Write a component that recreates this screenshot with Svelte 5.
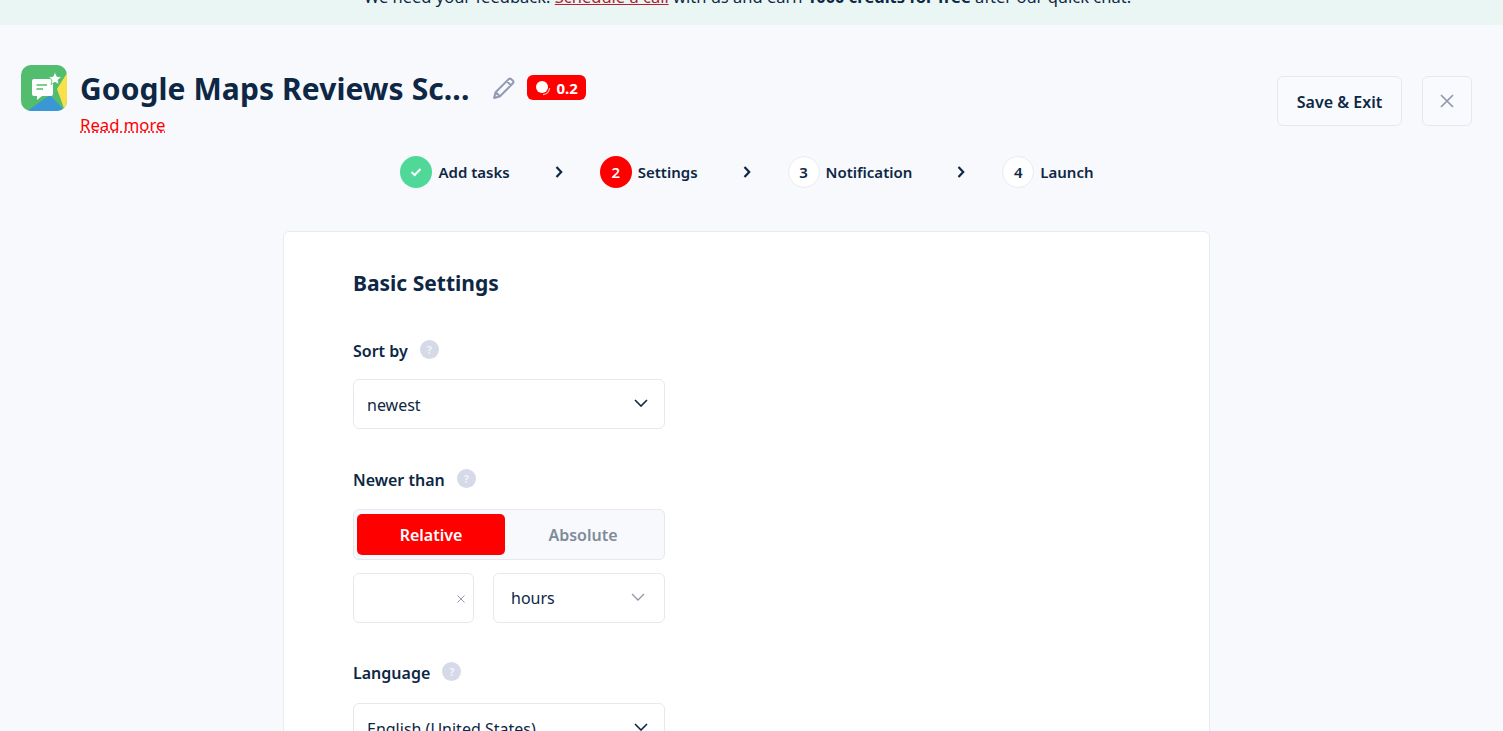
<script>
  const steps = [
    { label: 'Add tasks', state: 'done' },
    { label: 'Settings', state: 'active', num: 2 },
    { label: 'Notification', state: 'todo', num: 3 },
    { label: 'Launch', state: 'todo', num: 4 }
  ];
</script>

<div class="banner">
  <p>We need your feedback! <a href="#top">Schedule a call</a> with us and earn <b>1000 credits for free</b> after our quick chat!</p>
</div>

<header class="head">
  <svg class="logo" viewBox="0 0 46 46" aria-hidden="true">
    <defs><clipPath id="lg"><rect width="46" height="46" rx="10" /></clipPath></defs>
    <g clip-path="url(#lg)">
      <rect width="46" height="46" fill="#53bd6f" />
      <path d="M46 8 L36 24 L44 46 L46 46Z" fill="#f9e04b" />
      <path d="M6 46 L29 30 L44 46Z" fill="#3b96d6" />
    </g>
    <path d="M13 14 H30 Q32 14 32 16 V29 Q32 31 30 31 H21 L16 35 V31 H13 Q11 31 11 29 V16 Q11 14 13 14Z" fill="#fff" />
    <path d="M15.5 20 H26 M15.5 24 H22" stroke="#53bd6f" stroke-width="1.6" />
    <path d="M34 7 L36 11.5 L40.5 12 L37 15 L38 19.5 L34 17.2 L30 19.5 L31 15 L27.5 12 L32 11.5Z" fill="#fff" stroke="#53bd6f" stroke-width=".8" />
  </svg>
  <div class="title-col">
    <div class="title-row">
      <h1>Google Maps Reviews Sc...</h1>
      <svg class="pencil" viewBox="0 0 24 24" aria-hidden="true">
        <path d="M3 21 L4.4 15.6 L17 3 Q18.2 1.9 19.4 3 L21 4.6 Q22.1 5.8 21 7 L8.4 19.6Z M15.2 5 L19 8.8 M4.6 15.6 L8.4 19.4" fill="none" stroke="#939cb3" stroke-width="2" stroke-linejoin="round" />
      </svg>
      <span class="badge">
        <svg viewBox="0 0 16 16" aria-hidden="true">
          <circle cx="7" cy="7" r="6" fill="#fff" />
          <path d="M14.6 8 A7.5 7.5 0 0 1 8 14.6" fill="none" stroke="#ffb3b3" stroke-width="1.2" />
        </svg>
        0.2
      </span>
    </div>
    <a class="more" href="#top">Read more</a>
  </div>
  <div class="actions">
    <button class="save">Save &amp; Exit</button>
    <button class="close" aria-label="Close">
      <svg viewBox="0 0 14 14"><path d="M1 1 L13 13 M13 1 L1 13" stroke="#9297ad" stroke-width="1.7" fill="none" /></svg>
    </button>
  </div>
</header>

<nav class="steps">
  {#each steps as step, i}
    {#if i > 0}
      <svg class="arrow" viewBox="0 0 8 12" aria-hidden="true"><path d="M1.5 1 L6.2 6 L1.5 11" fill="none" stroke="#0d2744" stroke-width="2.2" /></svg>
    {/if}
    <div class="step">
      <span class="dot {step.state}">
        {#if step.state === 'done'}
          <svg viewBox="0 0 12 10" aria-hidden="true"><path d="M1.5 5 L4.6 8 L10.5 2" fill="none" stroke="#fff" stroke-width="2" /></svg>
        {:else}
          {step.num}
        {/if}
      </span>
      <span>{step.label}</span>
    </div>
  {/each}
</nav>

<main class="card">
  <h2>Basic Settings</h2>

  <div class="label first">Sort by <span class="help">?</span></div>
  <div class="select">
    <span>newest</span>
    <svg viewBox="0 0 14 8" aria-hidden="true"><path d="M1 1 L7 7 L13 1" fill="none" stroke="#0d2744" stroke-width="1.6" /></svg>
  </div>

  <div class="label newer">Newer than <span class="help">?</span></div>
  <div class="toggle">
    <span class="opt on">Relative</span>
    <span class="opt">Absolute</span>
  </div>
  <div class="pair">
    <div class="select num">
      <svg viewBox="0 0 8 8" aria-label="Clear"><path d="M.5 .5 L7.5 7.5 M7.5 .5 L.5 7.5" fill="none" stroke="#8f99a8" stroke-width="1" /></svg>
    </div>
    <div class="select unit">
      <span>hours</span>
      <svg viewBox="0 0 14 8" aria-hidden="true"><path d="M1 1 L7 7 L13 1" fill="none" stroke="#8f99a8" stroke-width="1.3" /></svg>
    </div>
  </div>

  <div class="label lang">Language <span class="help">?</span></div>
  <div class="select">
    <span>English (United States)</span>
    <svg viewBox="0 0 14 8" aria-hidden="true"><path d="M1 1 L7 7 L13 1" fill="none" stroke="#0d2744" stroke-width="1.6" /></svg>
  </div>
</main>

<style>
:global(html), :global(body) {
  height: 100%;
  overflow: hidden;
}
:global(body) {
  background: #f8f9fd;
  color: #0d2744;
  font-family: "Noto Sans", "Open Sans", sans-serif;
}
.banner {
  height: 25px;
  background: #e9f6f4;
  display: flex;
  justify-content: center;
  align-items: flex-end;
  overflow: hidden;
  font-size: 16.5px;
}
.banner p {
  margin: 0 8px 16px 0;
  line-height: 24px;
  white-space: nowrap;
}
.banner a {
  color: #b5202f;
}
.head {
  display: flex;
  align-items: flex-start;
  padding: 40px 31px 0 21px;
  height: 116px;
  box-sizing: border-box;
}
.logo {
  width: 46px;
  height: 46px;
  flex: none;
}
.title-col {
  margin-left: 13px;
}
.title-row {
  display: flex;
  align-items: flex-start;
  height: 48px;
}
h1 {
  margin: 0;
  font-size: 30px;
  line-height: 48px;
  font-weight: 700;
  letter-spacing: .09px;
  white-space: nowrap;
}
.pencil {
  width: 25px;
  height: 25px;
  margin: 11px 0 0 22px;
}
.badge {
  display: flex;
  align-items: center;
  gap: 5px;
  height: 25px;
  margin: 10px 0 0 11px;
  padding: 0 8px;
  border-radius: 6px;
  background: #ff0000;
  color: #fff;
  font-size: 15px;
  font-weight: 700;
}
.badge svg {
  width: 16px;
  height: 16px;
}
.more {
  display: block;
  color: #ff0000;
  font-size: 16.7px;
  line-height: 24px;
  text-decoration: underline dotted;
}
.actions {
  margin-left: auto;
  margin-top: 11px;
  display: flex;
  gap: 20px;
}
button {
  height: 50px;
  box-sizing: border-box;
  background: #f9fafd;
  border: 1px solid #e6e8f0;
  border-radius: 6px;
  color: inherit;
  font: 600 16px "Noto Sans", sans-serif;
}
.save {
  width: 125px;
  padding: 1px 0 0;
}
.close {
  width: 50px;
  padding: 0;
  display: flex;
  align-items: center;
  justify-content: center;
}
.close svg {
  width: 14px;
  height: 14px;
}
.steps {
  display: flex;
  justify-content: center;
  align-items: center;
  gap: 41px;
  height: 32px;
  margin-top: 15px;
  padding-right: 9px;
  font-size: 15px;
  font-weight: 600;
}
.step {
  display: flex;
  align-items: center;
  gap: 6px;
}
.arrow {
  width: 8px;
  height: 12px;
  margin: 0 -4px 0 4px;
}
.dot {
  width: 32px;
  height: 32px;
  box-sizing: border-box;
  border-radius: 50%;
  display: flex;
  align-items: center;
  justify-content: center;
  font-size: 15px;
}
.dot svg {
  width: 12px;
  height: 10px;
}
.done {
  background: #4fd898;
}
.active {
  background: #ff0000;
  color: #fff;
}
.todo {
  background: #fff;
  border: 1px solid #e9ebf1;
}
.card {
  margin: 43px 0 0 283px;
  width: 927px;
  box-sizing: border-box;
  padding: 35px 69px 40px;
  background: #fff;
  border: 1px solid #e9ebf0;
  border-radius: 6px;
}
h2 {
  margin: 0;
  font-size: 21px;
  line-height: 32px;
  font-weight: 700;
}
.label {
  display: flex;
  align-items: center;
  gap: 12px;
  height: 24px;
  margin: 39px 0 16px;
  font-size: 16px;
  font-weight: 600;
}
.first {
  margin-top: 40px;
}
.newer {
  margin-bottom: 17px;
}
.lang {
  margin-bottom: 18px;
}
.help {
  width: 19px;
  height: 19px;
  border-radius: 50%;
  background: #d6d9e8;
  color: #f2f3f8;
  display: flex;
  align-items: center;
  justify-content: center;
  font-size: 11px;
  font-weight: 700;
  margin-top: -3px;
}
.select {
  width: 312px;
  height: 50px;
  box-sizing: border-box;
  padding: 0 16px 0 13px;
  display: flex;
  align-items: center;
  justify-content: space-between;
  border: 1px solid #e6e8ee;
  border-radius: 6px;
  background: #fff;
  font-size: 16px;
}
.select > span {
  padding-top: 2px;
}
.select svg {
  width: 14px;
  height: 8px;
  margin-top: -3px;
}
.toggle {
  width: 312px;
  height: 51px;
  box-sizing: border-box;
  padding: 4px 3px;
  display: flex;
  border: 1px solid #e6e8ee;
  border-radius: 6px;
  background: #f8f9fc;
  font-size: 16px;
  font-weight: 600;
}
.opt {
  width: 148px;
  display: flex;
  align-items: center;
  justify-content: center;
  border-radius: 5px;
  color: #808b9a;
}
.on {
  background: #ff0000;
  color: #fff;
}
.opt + .opt {
  width: 156px;
}
.pair {
  display: flex;
  gap: 19px;
  margin-top: 13px;
}
.num {
  width: 121px;
  justify-content: flex-end;
  padding-right: 8px;
}
.num svg {
  width: 8px;
  height: 8px;
  margin-top: 2px;
}
.unit {
  width: 172px;
  padding-left: 17px;
  padding-right: 19px;
}
.unit > span {
  padding-top: 0;
}
.pair + .label {
  margin-top: 38px;
}
</style>
